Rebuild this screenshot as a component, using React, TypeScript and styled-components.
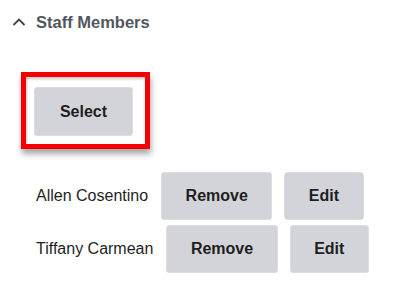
import styled, { createGlobalStyle } from "styled-components";

const GlobalStyle = createGlobalStyle`
  body {
    margin: 0;
    background: #fff;
    font-family: "Liberation Sans", Arial, sans-serif;
  }
`;

const Panel = styled.div`
  width: 400px;
  height: 292px;
  background: #fff;
`;

const Header = styled.div`
  display: flex;
  align-items: center;
  height: 44px;
  padding-left: 12px;
  gap: 10px;
  color: #50575e;
  font-size: 16.5px;
  font-weight: 700;
`;

const Chevron = styled.svg`
  width: 14px;
  height: 10px;
  fill: none;
  stroke: #3c434a;
  stroke-width: 1.8;
  margin-top: -1px;
`;

const Body = styled.div`
  padding: 28px 0 0 21px;
`;

const SelectFrame = styled.div`
  display: inline-block;
  border: 5px solid #f40000;
  padding: 10px 12px 8px 8px;
  box-shadow: 1px 5px 6px rgba(0, 0, 0, 0.35),
    inset 1px 2px 3px rgba(0, 0, 0, 0.22);
`;

const Button = styled.button`
  height: 48px;
  padding: 0 23.5px;
  border: 1px solid #dcdde1;
  border-radius: 3px;
  background: #d3d4d9;
  color: #1e1e1e;
  font-family: "Liberation Sans", Arial, sans-serif;
  font-size: 16px;
  font-weight: 700;
  cursor: pointer;
`;

const SelectButton = styled(Button)`
  display: block;
  height: 49px;
  width: 99px;
  padding: 0;
`;

const List = styled.div`
  display: flex;
  flex-direction: column;
  gap: 5px;
  margin-top: 23px;
  padding-left: 15px;
`;

const Row = styled.div`
  display: flex;
  align-items: center;
  gap: 12px;
`;

const Name = styled.span`
  margin-right: 1px;
  color: #1e1e1e;
  font-size: 16px;
`;

const staff = ["Allen Cosentino", "Tiffany Carmean"];

export default function App() {
  return (
    <Panel>
      <GlobalStyle />
      <Header>
        <Chevron viewBox="0 0 14 10">
          <polyline points="1.5,8 7,2.5 12.5,8" />
        </Chevron>
        Staff Members
      </Header>
      <Body>
        <SelectFrame>
          <SelectButton>Select</SelectButton>
        </SelectFrame>
        <List>
          {staff.map((name) => (
            <Row key={name}>
              <Name>{name}</Name>
              <Button>Remove</Button>
              <Button>Edit</Button>
            </Row>
          ))}
        </List>
      </Body>
    </Panel>
  );
}
